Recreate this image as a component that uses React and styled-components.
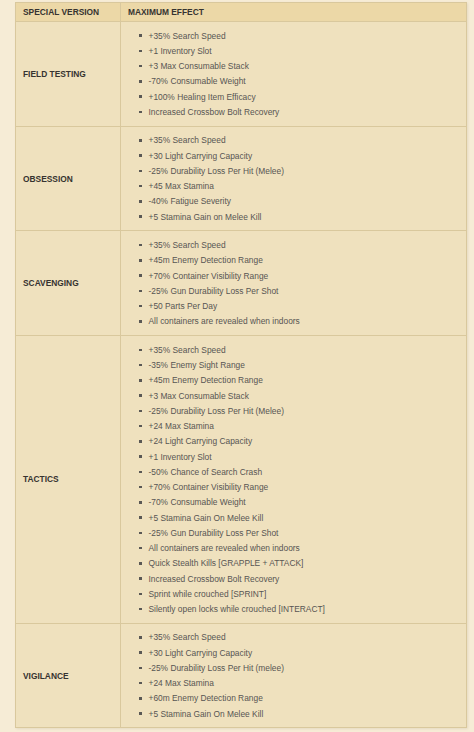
import React from 'react';
import styled, { createGlobalStyle } from 'styled-components';

const GlobalStyle = createGlobalStyle`
  html, body {
    margin: 0;
    padding: 0;
    background: #f6ecd6;
  }
  body {
    font-family: 'Liberation Sans', Arial, sans-serif;
  }
`;

const Page = styled.div`
  padding: 2px 8px 4px 15px;
`;

const Table = styled.table`
  width: 452px;
  border-collapse: collapse;
  background: #efe1be;
  border: 1px solid #d9c89d;
  box-shadow: 1px 1px 2px rgba(120, 100, 60, 0.12);
  font-size: 8.4px;
`;

const HeadCell = styled.th`
  background: #ecd8a7;
  color: #363330;
  font-weight: bold;
  text-align: left;
  height: 19px;
  padding: 0 7px;
  border: 1px solid #d9c89d;
  width: ${(p) => p.width || 'auto'};
  box-sizing: border-box;
`;

const LabelCell = styled.td`
  color: #363330;
  font-weight: bold;
  text-transform: uppercase;
  vertical-align: middle;
  padding: 0 7px;
  border: 1px solid #d9c89d;
`;

const EffectCell = styled.td`
  padding: 6.1px 7px 6.1px 18px;
  border: 1px solid #d9c89d;
  vertical-align: middle;
`;

const EffectList = styled.ul`
  list-style: none;
  margin: 0;
  padding: 0;
`;

const EffectItem = styled.li`
  display: flex;
  align-items: center;
  height: 15.25px;
  color: #575553;
  white-space: nowrap;
`;

const Bullet = styled.span`
  width: 2.5px;
  height: 2.5px;
  background: #5a5855;
  margin-right: 7px;
  flex: none;
`;

const rows = [
  {
    name: 'Field Testing',
    effects: [
      '+35% Search Speed',
      '+1 Inventory Slot',
      '+3 Max Consumable Stack',
      '-70% Consumable Weight',
      '+100% Healing Item Efficacy',
      'Increased Crossbow Bolt Recovery',
    ],
  },
  {
    name: 'Obsession',
    effects: [
      '+35% Search Speed',
      '+30 Light Carrying Capacity',
      '-25% Durability Loss Per Hit (Melee)',
      '+45 Max Stamina',
      '-40% Fatigue Severity',
      '+5 Stamina Gain on Melee Kill',
    ],
  },
  {
    name: 'Scavenging',
    effects: [
      '+35% Search Speed',
      '+45m Enemy Detection Range',
      '+70% Container Visibility Range',
      '-25% Gun Durability Loss Per Shot',
      '+50 Parts Per Day',
      'All containers are revealed when indoors',
    ],
  },
  {
    name: 'Tactics',
    effects: [
      '+35% Search Speed',
      '-35% Enemy Sight Range',
      '+45m Enemy Detection Range',
      '+3 Max Consumable Stack',
      '-25% Durability Loss Per Hit (Melee)',
      '+24 Max Stamina',
      '+24 Light Carrying Capacity',
      '+1 Inventory Slot',
      '-50% Chance of Search Crash',
      '+70% Container Visibility Range',
      '-70% Consumable Weight',
      '+5 Stamina Gain On Melee Kill',
      '-25% Gun Durability Loss Per Shot',
      'All containers are revealed when indoors',
      'Quick Stealth Kills [GRAPPLE + ATTACK]',
      'Increased Crossbow Bolt Recovery',
      'Sprint while crouched [SPRINT]',
      'Silently open locks while crouched [INTERACT]',
    ],
  },
  {
    name: 'Vigilance',
    effects: [
      '+35% Search Speed',
      '+30 Light Carrying Capacity',
      '-25% Durability Loss Per Hit (melee)',
      '+24 Max Stamina',
      '+60m Enemy Detection Range',
      '+5 Stamina Gain On Melee Kill',
    ],
  },
];

const App = () => (
  <Page>
    <GlobalStyle />
    <Table>
      <thead>
        <tr>
          <HeadCell width="105px">SPECIAL VERSION</HeadCell>
          <HeadCell>MAXIMUM EFFECT</HeadCell>
        </tr>
      </thead>
      <tbody>
        {rows.map((row) => (
          <tr key={row.name}>
            <LabelCell>{row.name}</LabelCell>
            <EffectCell>
              <EffectList>
                {row.effects.map((effect, i) => (
                  <EffectItem key={i}>
                    <Bullet />
                    {effect}
                  </EffectItem>
                ))}
              </EffectList>
            </EffectCell>
          </tr>
        ))}
      </tbody>
    </Table>
  </Page>
);

export default App;
